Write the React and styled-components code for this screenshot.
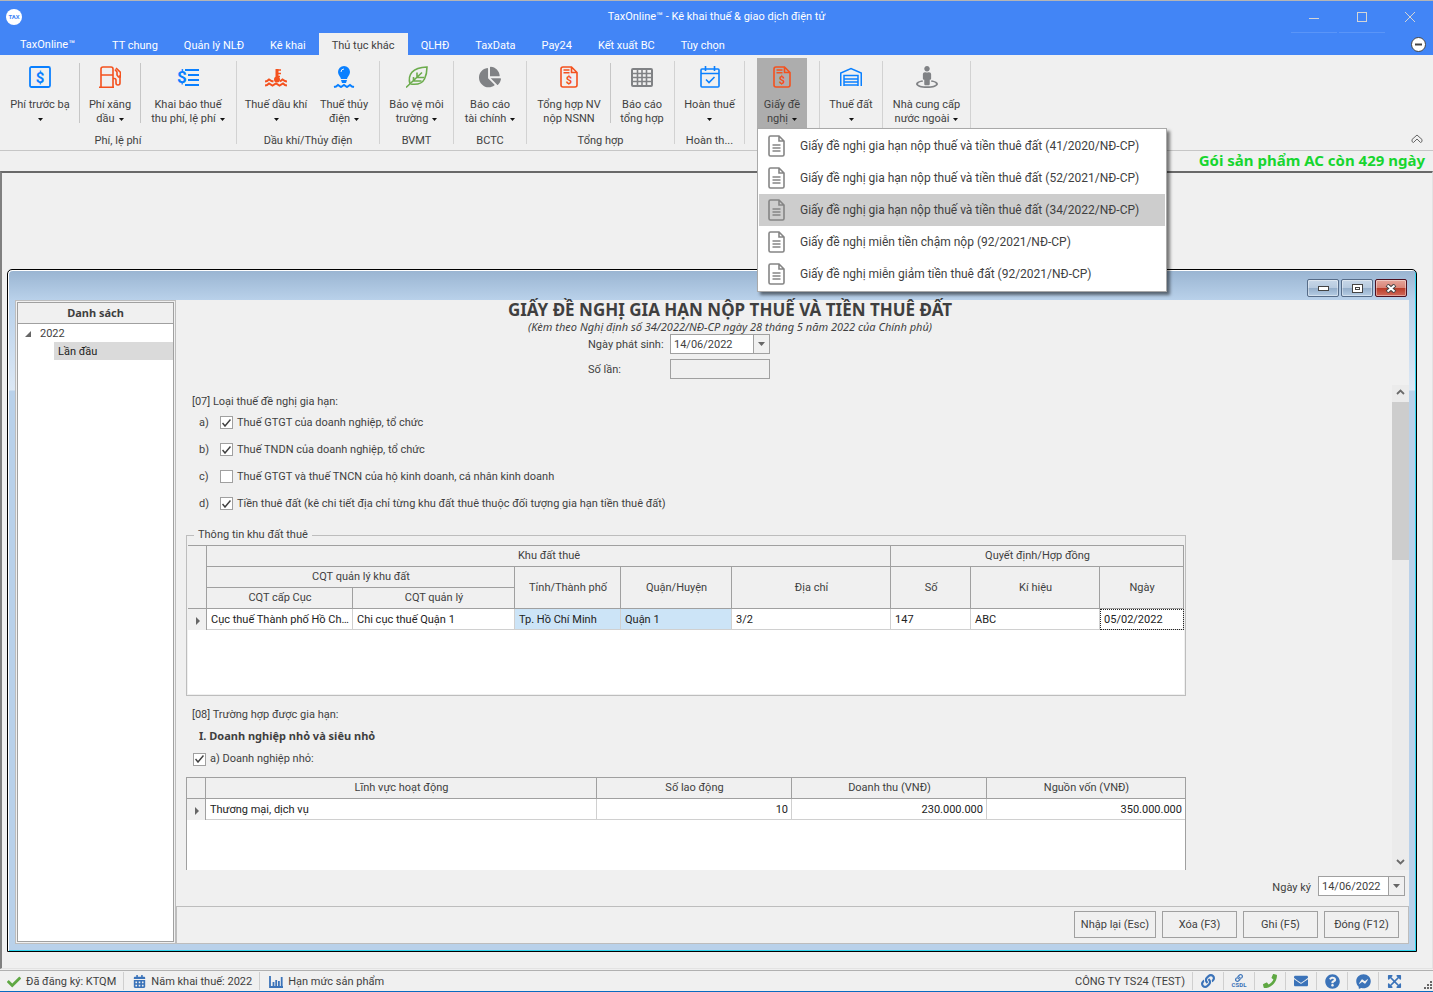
import React from "react";
import styled, { createGlobalStyle } from "styled-components";
import {
  FaCalendarAlt,
  FaChartPie,
  FaCheck,
  FaEnvelope,
  FaExpandArrowsAlt,
  FaFacebookMessenger,
  FaLink,
  FaPhone,
  FaQuestionCircle,
  FaStreetView,
} from "react-icons/fa";

const GlobalStyle = createGlobalStyle`
  * {
    box-sizing: border-box;
  }

  body {
    margin: 0;
    background: #f0f0f0;
    color: #3f3f3f;
    font-family: Roboto, "Liberation Sans", sans-serif;
    font-size: 11px;
    line-height: 14px;
  }

  button, input {
    margin: 0;
    font: inherit;
    color: inherit;
  }
`;

const humanist = `"Noto Sans", "Open Sans", sans-serif`;

/* ---------- icons ---------- */

const Svg = styled.svg`
  display: block;
  flex: none;
  fill: none;
  stroke: currentColor;
`;

const SvgText = styled.text`
  fill: currentColor;
  stroke: none;
  text-anchor: middle;
  font-weight: 700;
`;

const IconFee = () => (
  <Svg width="22" height="22" strokeWidth="1.8">
    <rect x="1" y="1" width="20" height="20" rx="1.5" />
    <SvgText x="11" y="16.500" fontSize="15">
      $
    </SvgText>
  </Svg>
);

const IconPump = () => (
  <Svg width="22" height="22" strokeWidth="1.6">
    <path d="M2 21V3q0-2 2-2h8q2 0 2 2v18M0 21.2h15M2 9h12" />
    <path d="M14 12.5h1.5q1.500 0 1.500 2V17q0 2 2 2t2-2V9M17 2l4.500 4.500V11h-2l-1.500-2V6l-2-2.500" />
  </Svg>
);

const IconDeclare = () => (
  <Svg width="24" height="22" strokeWidth="1.8">
    <SvgText x="6" y="17" fontSize="17">
      $
    </SvgText>
    <path d="M9 4h14M12 9h11M12 14h11M9 19h14" />
  </Svg>
);

const IconOil = () => (
  <Svg width="22" height="22" strokeWidth="2">
    <path d="M12 3v11" strokeWidth="3" />
    <path d="M13 4h3M13 7.500h3M13 10.500h2" strokeWidth="1.500" />
    <circle cx="12" cy="13.500" r="3" fill="currentColor" stroke="none" />
    <path d="M0 15.500l2-.5 2-1.500 2.500 1.500 2 .5M15 15.500l2.500-2L20 15l2 .5" />
    <path d="M0 19.500l2-.5 2-1.500 3.500 2 3.500-2 3.500 2 3.500-2 2 1.500 2 .5" />
  </Svg>
);

const IconHydro = () => (
  <Svg width="22" height="22" strokeWidth="2">
    <path
      d="M11 0a6 6 0 0 1 6 6c0 3-2.500 4.500-3 7H8c-.5-2.500-3-4-3-7a6 6 0 0 1 6-6zM8 14h6l-1 3H9z"
      fill="currentColor"
      stroke="none"
    />
    <path d="M8 6q0-3 3-3" stroke="#f0f0f0" strokeWidth="1" />
    <path d="M1 21l2-.5L5 19l3 2 3-2 3 2 3-2 2 1.500 2 .5" />
  </Svg>
);

const IconLeaf = () => (
  <Svg width="22" height="22" strokeWidth="1.6">
    <path d="M4 18C1.500 9 6 1.500 21 1c0 4-.5 8-2.500 12-2 4-7 6-14 5" />
    <path d="M0 21.500L16 6.500M11 11V6.500M11 11.500h7M7.500 14.500V11M7.500 15h8" />
  </Svg>
);

const IconInvoice = () => (
  <Svg width="18" height="22" strokeWidth="1.6">
    <path d="M11.500 1H3Q1 1 1 3v16q0 2 2 2h12q2 0 2-2V6.500zM11.500 1v5.500H17M3.500 4h6M3.500 6.800h6" />
    <SvgText x="9" y="18" fontSize="11">
      $
    </SvgText>
  </Svg>
);

const IconGrid = () => (
  <Svg width="22" height="22" strokeWidth="1.6">
    <rect x="1" y="3" width="20" height="17" rx="1" strokeWidth="2" />
    <path d="M1 7.500h20M1 11.500h20M1 15.500h20M6.500 3v17M11 3v17M15.500 3v17" />
  </Svg>
);

const IconRefund = () => (
  <Svg width="20" height="22" strokeWidth="1.6">
    <rect x="1" y="3" width="18" height="18" rx="1" />
    <path d="M1 7.500h18M5.500 0v5M14.500 0v5M6 13.500l3 3 5.500-5.500" />
  </Svg>
);

const IconWarehouse = () => (
  <Svg width="22" height="22" strokeWidth="1.5">
    <path d="M.75 20V7L11 2.500 21.250 7v13M4 20V9.500h14V20M4 13h14M4 16h14M4 19h14" />
  </Svg>
);

const IconDocument = () => (
  <Svg width="17" height="22" strokeWidth="1.6">
    <path d="M11 1H2.500Q1 1 1 2.500v17Q1 21 2.500 21h12q1.500 0 1.500-1.500V6zM11 1v5h5M4.500 10h8M4.500 13h8M4.500 16h8" />
  </Svg>
);

const IconChart = () => (
  <Svg width="14" height="12" strokeWidth="1.800">
    <path d="M1 0v11h13M4.500 6v4M7.200 4v6M9.900 5v5M12.700 1v9" />
  </Svg>
);

const Caret = () => (
  <Svg width="5" height="3" viewBox="0 0 5 3">
    <path d="M0 0h5L2.500 3z" fill="currentColor" stroke="none" />
  </Svg>
);

const RowArrow = () => (
  <Svg width="4" height="8">
    <path d="M0 0v8l4-4z" fill="currentColor" stroke="none" />
  </Svg>
);

/* ---------- frame ---------- */

const Page = styled.div`
  display: flex;
  flex-direction: column;
  min-height: 100vh;
  border-bottom: 1px solid #0a6bc0;
`;

const TitleBar = styled.header`
  display: grid;
  grid-template-columns: 1fr auto 1fr;
  align-items: center;
  height: 33px;
  border-top: 1px solid #b5b5b5;
  background: #4285f6;
  color: #fff;

  > svg {
    margin-left: 6px;
  }
`;

const AppTitle = styled.h1`
  margin: 0;
  font-size: 11px;
  font-weight: 400;
  line-height: 16px;
`;

const Controls = styled.div`
  display: flex;
  justify-content: flex-end;
  align-self: stretch;
  gap: 2px;
`;

const ControlButton = styled.button`
  display: grid;
  place-items: center;
  width: 46px;
  padding: 0;
  border: 0;
  border-bottom: 1px solid ${(props) => (props.$plain ? "transparent" : "#5a95f8")};
  background: none;
  color: #d5d5d5;
`;

const Tabs = styled.nav`
  display: flex;
  height: 22px;
  padding-right: 7px;
  background: #4285f6;
`;

const Tab = styled.button`
  padding: 3px 13px 0;
  border: 0;
  background: ${(props) => (props.$active ? "#f0f0f0" : "none")};
  color: ${(props) => (props.$active ? "#3f3f3f" : "#fff")};
  white-space: nowrap;
`;

const AppButton = styled(Tab)`
  width: 99px;
  padding: 1px 4px 0 0;
`;

const HideButton = styled.button`
  display: grid;
  place-items: center;
  margin-left: auto;
  padding: 0;
  border: 0;
  background: none;
`;

/* ---------- ribbon ---------- */

const RibbonBar = styled.div`
  display: flex;
  height: 96px;
  border-bottom: 1px solid #c6c6c6;
`;

const Group = styled.section`
  display: flex;
  flex-direction: column;
  flex: none;
  width: ${(props) => props.$width}px;
  padding-top: 3px;
`;

const GroupRule = styled.div`
  flex: none;
  width: 1px;
  height: 83px;
  margin-top: 6px;
  background: #d2d2d2;
`;

const GroupButtons = styled.div`
  display: flex;
  justify-content: center;
  height: 71px;
`;

const ButtonRule = styled.div`
  width: 1px;
  height: 60px;
  margin-top: 5px;
  background: #c6c6c6;
`;

const GroupLabel = styled.div`
  margin-top: 5px;
  text-align: center;
`;

const Anchor = styled.div`
  position: relative;
  display: flex;
`;

const RibbonButton = styled.button`
  display: flex;
  flex-direction: column;
  align-items: center;
  width: ${(props) => props.$width}px;
  padding: 8px 0 0;
  border: 0;
  background: ${(props) => (props.$open ? "#adadad" : "none")};
  white-space: nowrap;

  > svg {
    margin-bottom: 10px;
    color: ${(props) => props.$color};
  }
`;

const ButtonLine = styled.span`
  display: flex;
  align-items: center;
  gap: 4px;
  height: 14px;

  svg {
    color: #111;
  }
`;

const CollapseButton = styled.button`
  align-self: flex-end;
  margin: 0 10px 6px auto;
  padding: 0;
  border: 0;
  background: none;
  color: #666;
`;

const Menu = styled.ul`
  position: absolute;
  z-index: 2;
  top: 70px;
  left: 0;
  width: 410px;
  margin: 0;
  padding: 1px;
  border: 1px solid #a9a9a9;
  background: #fff;
  box-shadow: 3px 3px 3px rgba(0, 0, 0, 0.5);
  list-style: none;
`;

const MenuItem = styled.button`
  display: flex;
  align-items: center;
  gap: 15px;
  width: 100%;
  height: 32px;
  padding: 0 9px;
  border: 0;
  background: ${(props) => (props.$active ? "#cdcdcd" : "none")};
  font-size: 12px;
  line-height: 16px;
  white-space: nowrap;

  svg {
    color: #858585;
  }
`;

const Notice = styled.p`
  margin: 0;
  padding: 0 8px 2px 0;
  color: #17d62f;
  font: 700 15px/18px ${humanist};
  text-align: right;
`;

/* ---------- child window ---------- */

const Workspace = styled.main`
  display: flex;
  flex: 1;
  padding: 96px 15px 16px 5px;
  border: 1px solid #e3e3e3;
  border-top: 2px solid #696969;
  border-left: 2px solid #808080;
`;

const Window = styled.section`
  display: flex;
  flex: 1;
  flex-direction: column;
  min-width: 0;
  padding: 0 7px 7px;
  border: 1px solid #000;
  border-radius: 5px 5px 0 0;
  background: linear-gradient(#99b4d1, #b9d1ea 30px, #dce8f5 120px, #b9d1ea 121px);
  box-shadow: inset 1px 1px #fff, inset -1px -1px #2fd5ee;
`;

const WindowBar = styled.div`
  display: flex;
  justify-content: flex-end;
  gap: 2px;
  padding: 9px 2px 3px;
`;

const WindowButton = styled.button`
  display: grid;
  place-items: center;
  width: 32px;
  height: 18px;
  padding: 0;
  border: 1px solid ${(props) => (props.$close ? "#4d1020" : "#566c88")};
  border-radius: 2px;
  background: ${(props) =>
    props.$close
      ? "linear-gradient(#e5a59a, #d98578 48%, #b93a26 50%, #d0695a)"
      : "linear-gradient(#c7d7e8, #b7cadf 48%, #93adc9 50%, #b6cde4)"};
  box-shadow: inset 0 0 0 1px rgba(255, 255, 255, 0.4);
`;

const WindowBody = styled.div`
  display: flex;
  flex: 1;
  background: #f0f0f0;
`;

const Sidebar = styled.aside`
  display: flex;
  flex: none;
  width: 161px;
  padding: 1px;
  border: 1px solid #bdbdbd;
`;

const Tree = styled.div`
  flex: 1;
  border: 1px solid #a0a0a0;
  background: #fff;
`;

const TreeHeader = styled.h2`
  height: 21px;
  margin: 0;
  border-bottom: 1px solid #a0a0a0;
  background: #f0f0f0;
  font: 700 11px/20px ${humanist};
  text-align: center;
`;

const TreeRow = styled.div`
  display: flex;
  align-items: center;
  gap: 9px;
  height: 18px;
  margin-left: ${(props) => (props.$selected ? 36 : 0)}px;
  padding-top: 1px;
  padding-left: ${(props) => (props.$selected ? 4 : 7)}px;
  background: ${(props) => (props.$selected ? "#dadada" : "none")};
  color: ${(props) => (props.$selected ? "#222" : "inherit")};

  svg {
    color: #666;
  }
`;

const Main = styled.div`
  display: flex;
  flex: 1;
  flex-direction: column;
  min-width: 0;
`;

const FormHeader = styled.div`
  padding: 0 125px 6px 0;
  text-align: center;
`;

const FormTitle = styled.h2`
  margin: 0;
  font: 700 17px/20px ${humanist};
`;

const FormNote = styled.p`
  margin: 0 0 1px;
  font: italic 11px/13px ${humanist};
`;

const HeaderFields = styled.div`
  display: grid;
  grid-template-columns: 82px 100px 102px;
  justify-content: center;
  align-items: center;
  row-gap: 5px;
  text-align: left;

  label {
    grid-column: 1;
    padding-top: 2px;
  }
`;

const DateBox = styled.div`
  display: flex;
  width: ${(props) => props.$width}px;
  height: 20px;
  border: 1px solid #a0a0a0;
  background: #fff;
`;

const DateInput = styled.input`
  flex: 1;
  min-width: 0;
  padding: 1px 3px 0;
  border: 0;
  background: none;
`;

const DropButton = styled.button`
  display: grid;
  place-items: center;
  width: 16px;
  padding: 0;
  border: 0;
  border-left: 1px solid #a0a0a0;
  background: #f0f0f0;
  color: #666;
`;

const TextInput = styled.input`
  width: 100%;
  height: 20px;
  padding: 0 4px;
  border: 1px solid #a0a0a0;
  background: #f0f0f0;
`;

const Scroller = styled.div`
  display: flex;
  flex: 1;
`;

const ScrollContent = styled.div`
  display: flex;
  flex: 1;
  flex-direction: column;
  min-width: 0;
  max-width: 1020px;
  padding: 10px 10px 0;
`;

const ScrollBar = styled.div`
  display: flex;
  flex-direction: column;
  align-items: center;
  width: 17px;
  margin-left: auto;
  padding: 4px 0 5px;
  background: #ebebeb;
  color: #6b6b6b;

  svg:last-child {
    margin-top: auto;
  }
`;

const ScrollThumb = styled.div`
  width: 17px;
  height: 158px;
  margin-top: 7px;
  background: #cdcdcd;
`;

const SectionTitle = styled.div`
  padding-left: 6px;
`;

const CheckRow = styled.div`
  display: flex;
  align-items: center;
  height: ${(props) => (props.$short ? 14 : 27)}px;
  padding-left: ${(props) => (props.$short ? 7 : 13)}px;
`;

const Letter = styled.span`
  width: 21px;
`;

const CheckLabel = styled.label`
  display: flex;
  align-items: center;
  gap: 4px;
`;

const CheckBox = styled.span`
  display: grid;
  place-items: center;

  > * {
    grid-area: 1 / 1;
  }

  svg {
    visibility: hidden;
    pointer-events: none;
  }

  input:checked + svg {
    visibility: visible;
  }
`;

const CheckInput = styled.input`
  appearance: none;
  width: 13px;
  height: 13px;
  border: 1px solid #a0a0a0;
  background: #fff;
`;

const Fieldset = styled.fieldset`
  min-width: 0;
  margin: 11px 0 12px;
  padding: 3px 1px 1px;
  border: 1px solid #bdbdbd;
`;

const Legend = styled.legend`
  margin-left: 6px;
  padding: 0 4px;
`;

const LandGrid = styled.div`
  height: 149px;
  border-top: 1px solid #a0a0a0;
  background: #fff;
`;

const BusinessGrid = styled.div`
  flex: 1;
  min-height: 93px;
  margin-top: 11px;
  border: 1px solid #a0a0a0;
  border-bottom: 0;
  background: #fff;
`;

const Table = styled.table`
  width: 100%;
  border-spacing: 0;
  table-layout: fixed;

  th,
  td {
    height: 21px;
    padding: 0 3px 0 4px;
    overflow: hidden;
    text-overflow: ellipsis;
    white-space: nowrap;
  }

  td {
    padding-top: 2px;
  }

  th {
    border-right: 1px solid #a0a0a0;
    border-bottom: 1px solid #a0a0a0;
    background: #f0f0f0;
    font-weight: 400;
    text-align: center;
  }

  ${BusinessGrid} & tr > :last-child {
    border-right: 0;
  }
`;

const Cell = styled.td`
  border-right: 1px solid #d0d0d0;
  border-bottom: 1px solid #d0d0d0;
  background: ${(props) => (props.$tinted ? "#cce4f7" : "#fff")};
  color: #222;
  text-align: ${(props) => (props.$number ? "right" : "left")};
  ${(props) => props.$focused && "outline: 1px dotted #222; outline-offset: -1px;"}
`;

const MarkCell = styled.td`
  border-right: 1px solid #a0a0a0;
  background: #f0f0f0;

  svg {
    margin-left: 4px;
    color: #666;
  }
`;

const GroupTitle = styled.h3`
  margin: 7px 0 9px;
  padding-left: 13px;
  font: 700 11px/14px ${humanist};
`;

const SignRow = styled.div`
  display: flex;
  justify-content: flex-end;
  align-items: center;
  gap: 7px;
  height: 36px;
  padding: 0 4px 4px 0;

  label {
    padding-top: 4px;
  }
`;

const Footer = styled.div`
  display: flex;
  justify-content: flex-end;
  gap: 6px;
  height: 38px;
  padding: 4px 9px;
  border: 1px solid #bdbdbd;
`;

const ActionButton = styled.button`
  min-width: 75px;
  height: 27px;
  padding: 0 6px;
  border: 1px solid #a0a0a0;
  background: #f0f0f0;
`;

/* ---------- status bar ---------- */

const StatusBar = styled.footer`
  display: flex;
  align-items: center;
  height: 21px;
  margin-top: 1px;
  padding: 0 1px 0 7px;
  border-top: 1px solid #b0b0b0;
`;

const StatusItem = styled.div`
  display: flex;
  align-items: center;
  gap: 5px;
  height: 18px;
  padding-top: 1px;
  padding-right: 7px;
  margin-right: ${(props) => (props.$last ? 0 : 9)}px;
  border-right: 1px solid ${(props) => (props.$last ? "transparent" : "#cfcfcf")};

  svg {
    color: ${(props) => props.$color || "#3b73b9"};
  }
`;

const Company = styled.div`
  margin-left: auto;
  padding: 1px 7px 0 0;
`;

const StatusButton = styled.button`
  display: grid;
  place-items: center;
  width: 31px;
  height: 18px;
  padding: 0;
  border: 0;
  border-left: 1px solid #cfcfcf;
  background: none;
  color: ${(props) => props.$color || "#3b73b9"};
`;

const Database = styled.span`
  display: grid;
  justify-items: center;
  font-size: 6px;
  font-weight: 700;
  line-height: 6px;
`;

const Grip = styled.div`
  align-self: flex-end;
  margin: 0 0 2px 15px;
  color: #666;
`;

/* ---------- data ---------- */

const blue = "#0a80ff";
const orange = "#f4511e";
const gray = "#808285";

const tabs = [
  "TT chung",
  "Quản lý NLĐ",
  "Kê khai",
  "Thủ tục khác",
  "QLHĐ",
  "TaxData",
  "Pay24",
  "Kết xuất BC",
  "Tùy chọn",
];

const groups = [
  {
    label: "Phí, lệ phí",
    width: 236,
    items: [
      { lines: ["Phí trước bạ", ""], width: 78, icon: <IconFee />, color: blue, drop: true },
      { lines: ["Phí xăng", "dầu"], width: 60, icon: <IconPump />, color: orange, drop: true, rule: true },
      { lines: ["Khai báo thuế", "thu phí, lệ phí"], width: 94, icon: <IconDeclare />, color: blue, drop: true, rule: true },
    ],
  },
  {
    label: "Dầu khí/Thủy điện",
    width: 142,
    items: [
      { lines: ["Thuế dầu khí", ""], width: 72, icon: <IconOil />, color: orange, drop: true },
      { lines: ["Thuế thủy", "điện"], width: 64, icon: <IconHydro />, color: blue, drop: true },
    ],
  },
  {
    label: "BVMT",
    width: 73,
    items: [
      { lines: ["Bảo vệ môi", "trường"], width: 66, icon: <IconLeaf />, color: "#6cac4d", drop: true },
    ],
  },
  {
    label: "BCTC",
    width: 72,
    items: [
      { lines: ["Báo cáo", "tài chính"], width: 66, icon: <FaChartPie size={22} />, color: gray, drop: true },
    ],
  },
  {
    label: "Tổng hợp",
    width: 147,
    items: [
      { lines: ["Tổng hợp NV", "nộp NSNN"], width: 82, icon: <IconInvoice />, color: orange },
      { lines: ["Báo cáo", "tổng hợp"], width: 62, icon: <IconGrid />, color: gray, rule: true },
    ],
  },
  {
    label: "Hoàn th...",
    width: 69,
    items: [
      { lines: ["Hoàn thuế", ""], width: 60, icon: <IconRefund />, color: blue, drop: true },
    ],
  },
  {
    width: 74,
    items: [
      { lines: ["Giấy đề", "nghị"], width: 50, icon: <IconInvoice />, color: orange, drop: true, open: true },
    ],
  },
  {
    width: 62,
    items: [
      { lines: ["Thuế đất", ""], width: 56, icon: <IconWarehouse />, color: blue, drop: true },
    ],
  },
  {
    width: 87,
    items: [
      { lines: ["Nhà cung cấp", "nước ngoài"], width: 80, icon: <FaStreetView size={22} />, color: gray, drop: true },
    ],
  },
];

const menuItems = [
  "Giấy đề nghị gia hạn nộp thuế và tiền thuê đất (41/2020/NĐ-CP)",
  "Giấy đề nghị gia hạn nộp thuế và tiền thuê đất (52/2021/NĐ-CP)",
  "Giấy đề nghị gia hạn nộp thuế và tiền thuê đất (34/2022/NĐ-CP)",
  "Giấy đề nghị miễn tiền chậm nộp (92/2021/NĐ-CP)",
  "Giấy đề nghị miễn giảm tiền thuê đất (92/2021/NĐ-CP)",
];

const taxTypes = [
  { letter: "a)", label: "Thuế GTGT của doanh nghiệp, tổ chức", checked: true },
  { letter: "b)", label: "Thuế TNDN của doanh nghiệp, tổ chức", checked: true },
  { letter: "c)", label: "Thuế GTGT và thuế TNCN của hộ kinh doanh, cá nhân kinh doanh" },
  {
    letter: "d)",
    label: "Tiền thuê đất (kê chi tiết địa chỉ từng khu đất thuê thuộc đối tượng gia hạn tiền thuê đất)",
    checked: true,
  },
];

/* ---------- components ---------- */

function Ribbon() {
  return (
    <RibbonBar>
      {groups.map((group, index) => (
        <React.Fragment key={index}>
          <Group $width={group.width}>
            <GroupButtons>
              {group.items.map((item) => (
                <React.Fragment key={item.lines[0]}>
                  {item.rule && <ButtonRule />}
                  <Anchor>
                    <RibbonButton $width={item.width} $color={item.color} $open={item.open}>
                      {item.icon}
                      <ButtonLine>{item.lines[0]}</ButtonLine>
                      <ButtonLine>
                        {item.lines[1]}
                        {item.drop && <Caret />}
                      </ButtonLine>
                    </RibbonButton>
                    {item.open && (
                      <Menu>
                        {menuItems.map((text, i) => (
                          <li key={text}>
                            <MenuItem $active={i === 2}>
                              <IconDocument />
                              {text}
                            </MenuItem>
                          </li>
                        ))}
                      </Menu>
                    )}
                  </Anchor>
                </React.Fragment>
              ))}
            </GroupButtons>
            {group.label && <GroupLabel>{group.label}</GroupLabel>}
          </Group>
          <GroupRule />
        </React.Fragment>
      ))}
      <CollapseButton aria-label="Thu gọn">
        <Svg width="12" height="10">
          <path d="M1 5.500L6 1l5 4.500v2L9.500 8.500 6 5 2.500 8.500 1 7.500z" />
        </Svg>
      </CollapseButton>
    </RibbonBar>
  );
}

function Check({ label, checked }) {
  return (
    <CheckLabel>
      <CheckBox>
        <CheckInput type="checkbox" defaultChecked={checked} />
        <Svg width="9" height="8" strokeWidth="1.5">
          <path d="M.5 4l2.500 3L8.500.5" />
        </Svg>
      </CheckBox>
      {label}
    </CheckLabel>
  );
}

function DateField({ id, width }) {
  return (
    <DateBox $width={width}>
      <DateInput id={id} defaultValue="14/06/2022" />
      <DropButton aria-label="Chọn ngày">
        <Svg width="7" height="4">
          <path d="M0 0h7L3.500 4z" fill="currentColor" stroke="none" />
        </Svg>
      </DropButton>
    </DateBox>
  );
}

function LandTable() {
  return (
    <LandGrid>
      <Table>
        <colgroup>
          {[19, 146, 162, 106, 111, 159, 80, 129, 84].map((width, i) => (
            <col key={i} width={width} />
          ))}
        </colgroup>
        <thead>
          <tr>
            <th rowSpan="3" />
            <th colSpan="5">Khu đất thuê</th>
            <th colSpan="3">Quyết định/Hợp đồng</th>
          </tr>
          <tr>
            <th colSpan="2">CQT quản lý khu đất</th>
            <th rowSpan="2">Tỉnh/Thành phố</th>
            <th rowSpan="2">Quận/Huyện</th>
            <th rowSpan="2">Địa chỉ</th>
            <th rowSpan="2">Số</th>
            <th rowSpan="2">Kí hiệu</th>
            <th rowSpan="2">Ngày</th>
          </tr>
          <tr>
            <th>CQT cấp Cục</th>
            <th>CQT quản lý</th>
          </tr>
        </thead>
        <tbody>
          <tr>
            <MarkCell>
              <RowArrow />
            </MarkCell>
            <Cell>Cục thuế Thành phố Hồ Ch...</Cell>
            <Cell>Chi cục thuế Quận 1</Cell>
            <Cell $tinted>Tp. Hồ Chí Minh</Cell>
            <Cell $tinted>Quận 1</Cell>
            <Cell>3/2</Cell>
            <Cell>147</Cell>
            <Cell>ABC</Cell>
            <Cell $focused>05/02/2022</Cell>
          </tr>
        </tbody>
      </Table>
    </LandGrid>
  );
}

function BusinessTable() {
  return (
    <BusinessGrid>
      <Table>
        <colgroup>
          {[19, 391, 195, 195, 198].map((width, i) => (
            <col key={i} width={width} />
          ))}
        </colgroup>
        <thead>
          <tr>
            <th />
            <th>Lĩnh vực hoạt động</th>
            <th>Số lao động</th>
            <th>Doanh thu (VNĐ)</th>
            <th>Nguồn vốn (VNĐ)</th>
          </tr>
        </thead>
        <tbody>
          <tr>
            <MarkCell>
              <RowArrow />
            </MarkCell>
            <Cell>Thương mại, dịch vụ</Cell>
            <Cell $number>10</Cell>
            <Cell $number>230.000.000</Cell>
            <Cell $number>350.000.000</Cell>
          </tr>
        </tbody>
      </Table>
    </BusinessGrid>
  );
}

function RequestForm() {
  return (
    <Main>
      <FormHeader>
        <FormTitle>GIẤY ĐỀ NGHỊ GIA HẠN NỘP THUẾ VÀ TIỀN THUÊ ĐẤT</FormTitle>
        <FormNote>(Kèm theo Nghị định số 34/2022/NĐ-CP ngày 28 tháng 5 năm 2022 của Chính phủ)</FormNote>
        <HeaderFields>
          <label htmlFor="issued">Ngày phát sinh:</label>
          <DateField id="issued" width={100} />
          <label htmlFor="times">Số lần:</label>
          <TextInput id="times" />
        </HeaderFields>
      </FormHeader>
      <Scroller>
        <ScrollContent>
          <SectionTitle>[07] Loại thuế đề nghị gia hạn:</SectionTitle>
          {taxTypes.map((type) => (
            <CheckRow key={type.letter}>
              <Letter>{type.letter}</Letter>
              <Check label={type.label} checked={type.checked} />
            </CheckRow>
          ))}
          <Fieldset>
            <Legend>Thông tin khu đất thuê</Legend>
            <LandTable />
          </Fieldset>
          <SectionTitle>[08] Trường hợp được gia hạn:</SectionTitle>
          <GroupTitle>I. Doanh nghiệp nhỏ và siêu nhỏ</GroupTitle>
          <CheckRow $short>
            <Check label="a) Doanh nghiệp nhỏ:" checked />
          </CheckRow>
          <BusinessTable />
        </ScrollContent>
        <ScrollBar>
          <Svg width="9" height="6" strokeWidth="1.8">
            <path d="M1 5l3.500-3.500L8 5" />
          </Svg>
          <ScrollThumb />
          <Svg width="9" height="6" strokeWidth="1.8">
            <path d="M1 1l3.500 3.500L8 1" />
          </Svg>
        </ScrollBar>
      </Scroller>
      <SignRow>
        <label htmlFor="signed">Ngày ký</label>
        <DateField id="signed" width={87} />
      </SignRow>
      <Footer>
        <ActionButton>Nhập lại (Esc)</ActionButton>
        <ActionButton>Xóa (F3)</ActionButton>
        <ActionButton>Ghi (F5)</ActionButton>
        <ActionButton>Đóng (F12)</ActionButton>
      </Footer>
    </Main>
  );
}

function Status() {
  return (
    <StatusBar>
      <StatusItem $color="#5fa843">
        <FaCheck size={14} />
        Đã đăng ký: KTQM
      </StatusItem>
      <StatusItem>
        <FaCalendarAlt size={13} />
        Năm khai thuế: 2022
      </StatusItem>
      <StatusItem $last>
        <IconChart />
        Hạn mức sản phẩm
      </StatusItem>
      <Company>CÔNG TY TS24 (TEST)</Company>
      <StatusButton aria-label="Liên kết">
        <FaLink size={14} />
      </StatusButton>
      <StatusButton>
        <Database>
          <FaLink size={8} />
          CSDL
        </Database>
      </StatusButton>
      <StatusButton aria-label="Điện thoại" $color="#5fa843">
        <FaPhone size={14} />
      </StatusButton>
      <StatusButton aria-label="Thư">
        <FaEnvelope size={14} />
      </StatusButton>
      <StatusButton aria-label="Trợ giúp">
        <FaQuestionCircle size={15} />
      </StatusButton>
      <StatusButton aria-label="Messenger">
        <FaFacebookMessenger size={15} />
      </StatusButton>
      <StatusButton aria-label="Toàn màn hình">
        <FaExpandArrowsAlt size={15} />
      </StatusButton>
      <Grip>
        <Svg width="8" height="8">
          <path
            d="M6 0h2v2H6zM3 3h2v2H3zM6 3h2v2H6zM0 6h2v2H0zM3 6h2v2H3zM6 6h2v2H6z"
            fill="currentColor"
            stroke="none"
          />
        </Svg>
      </Grip>
    </StatusBar>
  );
}

function App() {
  return (
    <Page>
      <GlobalStyle />
      <TitleBar>
        <Svg width="16" height="16" color="#4285f6">
          <circle cx="8" cy="8" r="8" fill="#fff" stroke="none" />
          <SvgText x="8" y="10" fontSize="6">
            TAX
          </SvgText>
        </Svg>
        <AppTitle>TaxOnline™ - Kê khai thuế &amp; giao dịch điện tử</AppTitle>
        <Controls>
          <ControlButton aria-label="Thu nhỏ">
            <Svg width="10" height="10">
              <path d="M0 6.500h10" />
            </Svg>
          </ControlButton>
          <ControlButton aria-label="Phóng to">
            <Svg width="10" height="10">
              <rect x=".5" y=".5" width="9" height="9" />
            </Svg>
          </ControlButton>
          <ControlButton aria-label="Đóng" $plain>
            <Svg width="10" height="10">
              <path d="M0 0l10 10M10 0L0 10" />
            </Svg>
          </ControlButton>
        </Controls>
      </TitleBar>
      <Tabs>
        <AppButton>TaxOnline™</AppButton>
        {tabs.map((tab) => (
          <Tab key={tab} $active={tab === "Thủ tục khác"}>
            {tab}
          </Tab>
        ))}
        <HideButton aria-label="Ẩn">
          <Svg width="15" height="15" color="#444">
            <circle cx="7.500" cy="7.500" r="7" fill="#fff" />
            <path d="M4 7.500h7" strokeWidth="2" />
          </Svg>
        </HideButton>
      </Tabs>
      <Ribbon />
      <Notice>Gói sản phẩm AC còn 429 ngày</Notice>
      <Workspace>
        <Window>
          <WindowBar>
            <WindowButton aria-label="Thu nhỏ cửa sổ">
              <Svg width="11" height="5" color="#444">
                <rect x=".5" y=".5" width="10" height="4" fill="#fff" />
              </Svg>
            </WindowButton>
            <WindowButton aria-label="Phóng to cửa sổ">
              <Svg width="11" height="9" color="#444">
                <rect x=".5" y=".5" width="10" height="8" fill="#fff" />
                <rect x="3.500" y="3.500" width="4" height="2" />
              </Svg>
            </WindowButton>
            <WindowButton aria-label="Đóng cửa sổ" $close>
              <Svg width="12" height="9">
                <path d="M2 1l8 7M10 1L2 8" stroke="#444" strokeWidth="4" />
                <path d="M2.500 1.500l7 6M9.500 1.500l-7 6" stroke="#fff" strokeWidth="2" />
              </Svg>
            </WindowButton>
          </WindowBar>
          <WindowBody>
            <Sidebar>
              <Tree>
                <TreeHeader>Danh sách</TreeHeader>
                <TreeRow>
                  <Svg width="6" height="6">
                    <path d="M6 0v6H0z" fill="currentColor" stroke="none" />
                  </Svg>
                  2022
                </TreeRow>
                <TreeRow $selected>Lần đầu</TreeRow>
              </Tree>
            </Sidebar>
            <RequestForm />
          </WindowBody>
        </Window>
      </Workspace>
      <Status />
    </Page>
  );
}

export default App;
